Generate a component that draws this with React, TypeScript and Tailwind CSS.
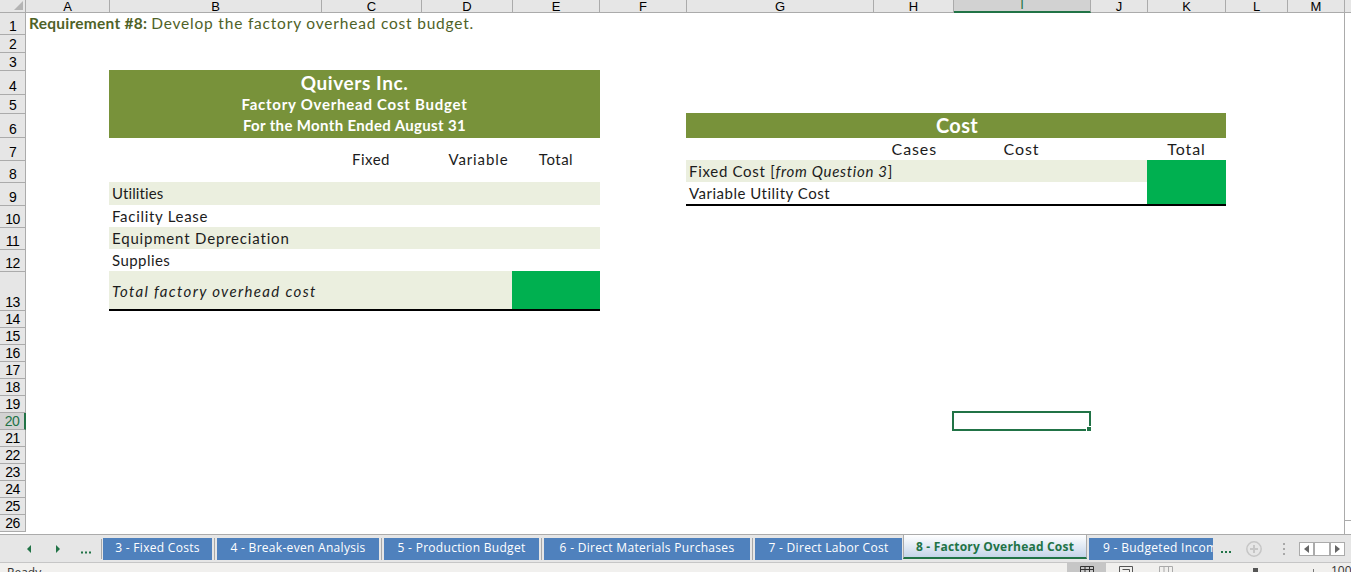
const cols: [string, number][] = [["A",84],["B",212],["C",100],["D",91],["E",87],["F",87],["G",187],["H",80],["I",137],["J",57],["K",78],["L",62],["M",57]];
const rows: [number, number][] = [[1,22],[2,18],[3,18],[4,24],[5,19],[6,24],[7,23],[8,22],[9,23],[10,22],[11,22],[12,22],[13,39],[14,17],[15,17],[16,17],[17,17],[18,17],[19,17],[20,17],[21,17],[22,17],[23,17],[24,17],[25,17],[26,17]];
const tabs = [["3 - Fixed Costs","w-[109px]"],["4 - Break-even Analysis","w-[162px]"],["5 - Production Budget","w-[155px]"],["6 - Direct Materials Purchases","w-[206px]"],["7 - Direct Labor Cost","w-[147px]"]];
const gothic = "font-['Lato','Open_Sans',sans-serif]";

function Cell({ cls, children }: { cls: string; children?: React.ReactNode }) {
  return <div className={`flex min-w-0 items-center whitespace-nowrap ${cls}`}>{children}</div>;
}

export default function App() {
  return (
    <div className="flex h-[572px] w-[1351px] flex-col overflow-hidden bg-white font-['Liberation_Sans',sans-serif]">
      <div className="flex h-[13px] shrink-0 border-b border-[#ababab] bg-[#e6e6e6]">
        <div className="relative w-[26px] shrink-0 border-r border-[#ababab]">
          <div className="absolute bottom-[2px] right-[2px] h-0 w-0 border-b-[9px] border-l-[9px] border-b-[#b4b4b4] border-l-transparent" />
        </div>
        {cols.map(([n, w]) => (
          <div key={n} style={{ width: w }} className={`flex h-[13px] shrink-0 items-end justify-center overflow-hidden border-r border-[#ababab] text-[13px] leading-[15px] ${n === "I" ? "border-b-2 border-b-[#217346] bg-[#d2d2d2] text-[#217346]" : "text-black"}`}>
            <span className="-mb-[1px]">{n}</span>
          </div>
        ))}
        <div className="flex-1" />
      </div>
      <div className="flex h-[521px] shrink-0">
        <div className="flex w-[26px] shrink-0 flex-col">
          {rows.map(([n, h]) => (
            <div key={n} style={{ height: h }} className={`flex shrink-0 items-end justify-center border-b border-b-[#ababab] text-[14px] leading-[15px] tracking-[-0.6px] ${n === 20 ? "border-r-2 border-r-[#217346] bg-[#d2d2d2] text-[#217346]" : "border-r border-r-[#ababab] bg-[#e6e6e6] text-black"}`}>
              {n}
            </div>
          ))}
        </div>
        <div className={`grid h-[521px] w-[1318px] shrink-0 content-start grid-cols-[83px_212px_100px_91px_88px_86px_187px_80px_137px_57px_79px_62px_56px] grid-rows-[21px_18px_18px_24px_19px_25px_22px_22px_23px_22px_22px_22px_40px_101px_19px] ${gothic} text-[15px] text-[#1c1c1c]`}>
          <Cell cls="col-start-1 col-span-8 row-start-1 pl-[3px] text-[15.5px] tracking-[0.8px] text-[#4f6228]"><b className="mr-[4px] font-bold tracking-[0.25px]">Requirement #8:</b> Develop the factory overhead cost budget.</Cell>

          <Cell cls="col-start-2 col-span-4 row-start-4 justify-center bg-[#78923a] pt-[2px] text-[19px] font-bold tracking-[0.6px] text-white">Quivers Inc.</Cell>
          <Cell cls="col-start-2 col-span-4 row-start-5 justify-center bg-[#78923a] pt-[1px] text-[15px] font-bold tracking-[0.75px] text-white">Factory Overhead Cost Budget</Cell>
          <Cell cls="col-start-2 col-span-4 row-start-6 justify-center bg-[#78923a] text-[15px] font-bold tracking-[0.35px] text-white">For the Month Ended August 31</Cell>

          <Cell cls="col-start-7 col-span-5 row-start-6 justify-center bg-[#78923a] pb-[2px] pl-[2px] text-[20px] font-bold tracking-[0.3px] text-white">Cost</Cell>

          <Cell cls="col-start-3 row-start-7 row-span-2 justify-center pb-[2px] tracking-[0.5px]">Fixed</Cell>
          <Cell cls="col-start-4 row-start-7 row-span-2 justify-center pb-[2px] pl-[24px] tracking-[0.9px]">Variable</Cell>
          <Cell cls="col-start-5 row-start-7 row-span-2 justify-center pb-[2px] tracking-[0.5px]">Total</Cell>
          <Cell cls="col-start-7 col-span-2 row-start-7 justify-end pr-[16px] text-[16px] tracking-[0.9px]">Cases</Cell>
          <Cell cls="col-start-9 row-start-7 justify-center text-[16px] tracking-[0.9px]">Cost</Cell>
          <Cell cls="col-start-11 row-start-7 justify-center text-[16px] tracking-[0.9px]">Total</Cell>

          <Cell cls="col-start-7 col-span-4 row-start-8 bg-[#ebefdf] pl-[3px] tracking-[0.7px]"><span>Fixed Cost [<i>from Question 3</i>]</span></Cell>
          <Cell cls="col-start-7 col-span-4 row-start-9 h-[24px] border-b-2 border-black pl-[3px] tracking-[0.5px]">Variable Utility Cost</Cell>
          <div className="col-start-11 row-start-8 row-span-2 h-[46px] border-b-2 border-black bg-[#00b050]" />

          <Cell cls="col-start-2 col-span-4 row-start-9 bg-[#ebefdf] pl-[3px] tracking-[0.1px]">Utilities</Cell>
          <Cell cls="col-start-2 col-span-4 row-start-10 pl-[3px] tracking-[0.7px]">Facility Lease</Cell>
          <Cell cls="col-start-2 col-span-4 row-start-11 bg-[#ebefdf] pl-[3px] tracking-[0.82px]">Equipment Depreciation</Cell>
          <Cell cls="col-start-2 col-span-4 row-start-12 pl-[3px] tracking-[0.45px]">Supplies</Cell>
          <Cell cls="col-start-2 col-span-3 row-start-13 border-b-2 border-black bg-[#ebefdf] pl-[3px] pt-[2px] italic tracking-[1.35px]">Total factory overhead cost</Cell>
          <div className="col-start-5 row-start-13 border-b-2 border-black bg-[#00b050]" />

          <div className="relative col-start-9 row-start-15 -ml-[1px] -mt-[1px] h-[20px] w-[139px] border-2 border-[#217346]">
            <div className="absolute -bottom-[3px] -right-[3px] h-[6px] w-[6px] border border-white bg-[#217346]" />
          </div>
        </div>
        <div className="flex flex-1 flex-col justify-end border-l border-[#ababab] bg-white">
          <div className="h-[14px] border-t border-[#ababab]" />
        </div>
      </div>
      <div className="flex h-[29px] shrink-0 items-center border-y border-t-[#ababab] border-b-[#c6c6c6] bg-[#e6e6e6] pl-[26px] font-['Open_Sans',sans-serif] text-[12px] tracking-[0.3px] text-white">
        <svg className="shrink-0" width="65" height="12" viewBox="0 0 65 12"><path d="M5 2v8L1 6zM30 2v8l4-4z" fill="#217346" /><rect x="55" y="8.5" width="2" height="2" fill="#217346" /><rect x="59" y="8.5" width="2" height="2" fill="#217346" /><rect x="63" y="8.5" width="2" height="2" fill="#217346" /></svg>
        <div className="ml-[10px] h-[20px] w-px shrink-0 bg-[#a8a8a8]" />
        <div className="ml-[1px] flex h-[22px] shrink-0 items-center gap-[2px]">
          {tabs.map(([t, w], i) => (
            <div key={t} className="flex items-center gap-[2px]">
              {i > 0 && <div className="h-[22px] w-[1px] bg-[#a8a8a8]" />}
              <div className={`flex h-[22px] items-center justify-center whitespace-nowrap bg-[#4f81bd] pb-[1px] ${w}`}>{t}</div>
            </div>
          ))}
        </div>
        <div className="ml-[1px] flex h-[24px] w-[184px] shrink-0 items-center justify-center self-start border-x border-b-2 border-[#ababab] border-b-[#217346] bg-gradient-to-b from-white to-[#c5d5e9] pt-[1px] text-[12px] font-bold tracking-[0.2px] text-[#217346]">8 - Factory Overhead Cost</div>
        <div className="ml-[2px] flex h-[22px] w-[124px] shrink-0 items-center overflow-hidden whitespace-nowrap bg-[#4f81bd] pb-[1px] pl-[14px]">9 - Budgeted Income Statement</div>
        <svg className="ml-[8px] mt-[6px] shrink-0" width="11" height="4" viewBox="0 0 11 4"><rect x="0" y="1" width="2" height="2" fill="#217346" /><rect x="4" y="1" width="2" height="2" fill="#217346" /><rect x="8" y="1" width="2" height="2" fill="#217346" /></svg>
        <svg className="ml-[14px] shrink-0" width="16" height="16" viewBox="0 0 16 16"><circle cx="8" cy="8" r="7.2" fill="none" stroke="#c6c6c6" strokeWidth="1.5" /><path d="M8 4v8M4 8h8" stroke="#c6c6c6" strokeWidth="2" /></svg>
        <svg className="ml-[20px] shrink-0" width="4" height="14" viewBox="0 0 4 14"><rect x="1" y="1" width="2" height="2" fill="#a8a8a8" /><rect x="1" y="6" width="2" height="2" fill="#a8a8a8" /><rect x="1" y="11" width="2" height="2" fill="#a8a8a8" /></svg>
        <div className="ml-[13px] flex h-[14px] w-[46px] shrink-0 border border-[#ababab] bg-white">
          <div className="flex w-[15px] items-center justify-center border-r-2 border-[#ababab]"><div className="h-0 w-0 border-y-[4px] border-r-[5px] border-y-transparent border-r-[#666]" /></div>
          <div className="flex-1" />
          <div className="flex w-[15px] items-center justify-center border-l-2 border-[#ababab]"><div className="h-0 w-0 border-y-[4px] border-l-[5px] border-y-transparent border-l-[#666]" /></div>
        </div>
      </div>
      <div className="flex h-[9px] shrink-0 items-start overflow-hidden bg-[#f1f0ee] font-['Open_Sans',sans-serif] text-[12px] leading-[16px] text-[#333]">
        <span className="ml-[7px] mt-[2px]">Ready</span>
        <div className="ml-auto flex w-[284px] shrink-0 items-start">
          <div className="flex h-[9px] w-[39px] shrink-0 justify-center bg-[#c6c6c6] pt-[3px]">
            <svg width="14" height="6" viewBox="0 0 14 6"><path d="M.5 6V.5h13V6M.5 3.5h13M5 .5V6M9.5 .5V6" fill="none" stroke="#333" /></svg>
          </div>
          <svg className="ml-[13px] mt-[3px] shrink-0" width="14" height="6" viewBox="0 0 14 6"><path d="M.5 6V.5h13V6M3.5 3.5h7V6" fill="none" stroke="#555" /></svg>
          <svg className="ml-[26px] mt-[3px] shrink-0" width="14" height="6" viewBox="0 0 14 6"><path d="M.5 6V.5h13V6M5 .5V6M9.5 .5V6" fill="none" stroke="#aaa" /></svg>
          <div className="ml-[80px] mt-[5px] h-[4px] w-[5px] shrink-0 bg-[#555]" />
          <div className="ml-[55px] mt-[6px] h-[3px] w-px shrink-0 bg-[#777]" />
          <span className="ml-[17px] shrink-0">100%</span>
        </div>
      </div>
    </div>
  );
}
